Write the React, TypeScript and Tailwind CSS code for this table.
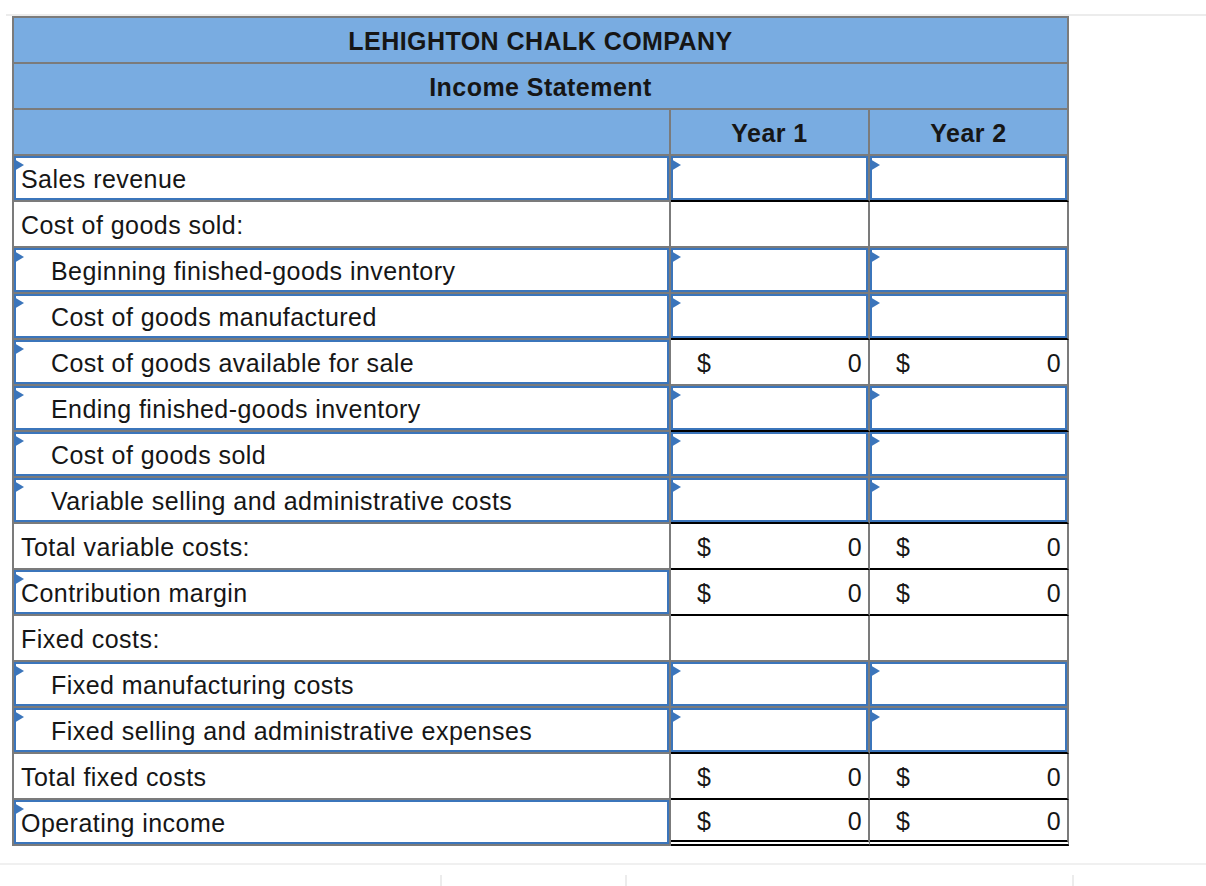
import React from "react";

type Val = "input" | "empty" | "total";
type Line = "none" | "single" | "double";
type Row = { label: string; indent?: boolean; input?: boolean; val: Val; line: Line };

const rows: Row[] = [
  { label: "Sales revenue", input: true, val: "input", line: "single" },
  { label: "Cost of goods sold:", val: "empty", line: "none" },
  { label: "Beginning finished-goods inventory", indent: true, input: true, val: "input", line: "none" },
  { label: "Cost of goods manufactured", indent: true, input: true, val: "input", line: "single" },
  { label: "Cost of goods available for sale", indent: true, input: true, val: "total", line: "none" },
  { label: "Ending finished-goods inventory", indent: true, input: true, val: "input", line: "single" },
  { label: "Cost of goods sold", indent: true, input: true, val: "input", line: "none" },
  { label: "Variable selling and administrative costs", indent: true, input: true, val: "input", line: "single" },
  { label: "Total variable costs:", val: "total", line: "single" },
  { label: "Contribution margin", input: true, val: "total", line: "single" },
  { label: "Fixed costs:", val: "empty", line: "none" },
  { label: "Fixed manufacturing costs", indent: true, input: true, val: "input", line: "none" },
  { label: "Fixed selling and administrative expenses", indent: true, input: true, val: "input", line: "single" },
  { label: "Total fixed costs", val: "total", line: "single" },
  { label: "Operating income", input: true, val: "total", line: "double" },
];

const Marker = () => (
  <span className="absolute left-[-2px] top-[1px] w-0 h-0 border-y-[6px] border-y-transparent border-l-[10px] border-l-[#3b75bb]" />
);

const lineCls = (line: Line) => {
  if (line === "single") return "border-b-2 border-b-black";
  if (line === "double") return "border-b-[6px] border-b-black [border-bottom-style:double]";
  return "border-b-2 border-b-[#7b7b7b]";
};

const ValueCell = ({ val, line }: { val: Val; line: Line }) => (
  <div className={`w-[199px] h-full border-r-2 border-r-[#7b7b7b] ${lineCls(line)}`}>
    {val === "input" && (
      <div className="relative h-full border-2 border-[#3b75bb]">
        <Marker />
      </div>
    )}
    {val === "total" && (
      <div className="h-full flex items-center justify-between pl-[26px] pr-[6px] pt-[4px]">
        <span>$</span>
        <span>0</span>
      </div>
    )}
  </div>
);

export default function App() {
  return (
    <div className="w-[1206px] h-[886px] bg-white overflow-hidden font-['Liberation_Sans',Arial,sans-serif] text-[25px] tracking-[0.45px] text-[#161616]">
      <div className="h-[14px]" />
      <div className="ml-[6px] border-t-2 border-[#ececec]" />
      <div className="ml-[12px] w-[1057px] border-l-2 border-t-2 border-[#7b7b7b]">
        <div className="h-[46px] pt-[4px] border-r-2 border-b-2 border-[#7b7b7b] bg-[#79ace1] flex items-center justify-center font-bold">
          LEHIGHTON CHALK COMPANY
        </div>
        <div className="h-[46px] pt-[4px] border-r-2 border-b-2 border-[#7b7b7b] bg-[#79ace1] flex items-center justify-center font-bold">
          Income Statement
        </div>
        <div className="flex h-[46px] bg-[#79ace1] font-bold">
          <div className="w-[657px] border-r-2 border-b-2 border-[#7b7b7b]" />
          <div className="w-[199px] pt-[4px] border-r-2 border-b-2 border-[#7b7b7b] flex items-center justify-center">Year 1</div>
          <div className="w-[199px] pt-[4px] border-r-2 border-b-2 border-[#7b7b7b] flex items-center justify-center">Year 2</div>
        </div>
        {rows.map((r) => (
          <div key={r.label} className="flex h-[46px]">
            <div className="w-[657px] h-full border-r-2 border-b-2 border-[#7b7b7b]">
              {r.input ? (
                <div className={`relative h-full border-2 border-[#3b75bb] flex items-center pt-[4px] ${r.indent ? "pl-[35px]" : "pl-[5px]"}`}>
                  <Marker />
                  <span>{r.label}</span>
                </div>
              ) : (
                <div className={`h-full flex items-center pt-[4px] ${r.indent ? "pl-[37px]" : "pl-[7px]"}`}>{r.label}</div>
              )}
            </div>
            <ValueCell val={r.val} line={r.line} />
            <ValueCell val={r.val} line={r.line} />
          </div>
        ))}
      </div>
      <div className="h-[17px]" />
      <div className="border-t-2 border-[#f0f0f0]" />
      <div className="flex h-[21px] pt-[10px]">
        <div className="w-[440px]" />
        <div className="w-[185px] border-l-2 border-[#ececec]" />
        <div className="w-[447px] border-l-2 border-[#ececec]" />
        <div className="border-l-2 border-[#ececec]" />
      </div>
    </div>
  );
}
